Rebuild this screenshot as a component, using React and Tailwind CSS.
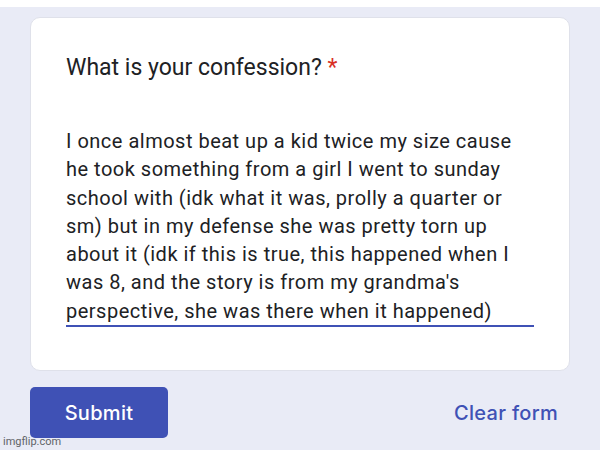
import React from 'react';

const lines = [
    'I once almost beat up a kid twice my size cause',
    'he took something from a girl I went to sunday',
    'school with (idk what it was, prolly a quarter or',
    'sm) but in my defense she was pretty torn up',
    'about it (idk if this is true, this happened when I',
    "was 8, and the story is from my grandma's",
    'perspective, she was there when it happened)',
];

export default function App() {
    return (
        <div className="relative w-[600px] h-[450px] overflow-hidden bg-[#e9ebf6] font-['Roboto',sans-serif]">
            <div className="h-[7px] bg-white" />
            <div className="px-[30px] pt-[10px]">
                <div className="bg-white rounded-[10px] border border-[#dfe1ea] h-[354px] pl-[35px] pr-[35px] pt-[35px]">
                    <h2 className="text-[23px] leading-[30px] text-[#202124]">
                        What is your confession? <span className="text-[#d93025]">*</span>
                    </h2>
                    <div className="mt-[44px] w-[468px] text-[20px] tracking-[0.5px] leading-[28.3px] text-[#202124] border-b-2 border-[#3f51b5]">
                        {lines.map((line, i) => (
                            <div key={i} className="whitespace-nowrap">{line}</div>
                        ))}
                    </div>
                </div>
            </div>
            <div className="flex items-center justify-between pl-[30px] pr-[42px] mt-[16px]">
                <button className="w-[138px] h-[51px] rounded-[5px] bg-[#3f51b5] text-white text-[20px] tracking-[0.3px] font-medium font-['Inter',sans-serif]">
                    Submit
                </button>
                <span className="text-[20px] tracking-[0.3px] font-medium text-[#3f51b5] font-['Inter',sans-serif]">Clear form</span>
            </div>
            <div className="absolute left-[3px] bottom-[1px] text-[11px] leading-[14px] text-[#5f6368] font-['Roboto',sans-serif]">imgflip.com</div>
        </div>
    );
}
